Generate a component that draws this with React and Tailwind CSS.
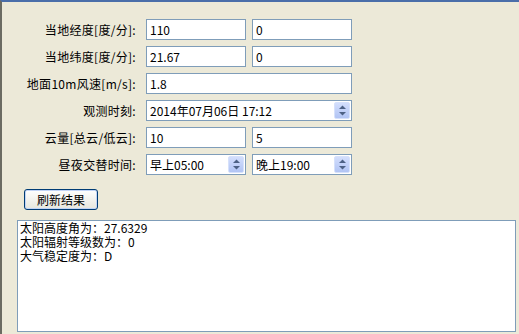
import React from 'react'

const font = { fontFamily: '"Noto Sans CJK SC", "DejaVu Sans", sans-serif' }

function Field({ value, className = '' }) {
  return (
    <div className={`h-[21px] bg-white border border-[#7f9db9] flex items-center pl-[3px] text-[12px] text-black ${className}`}>
      {value}
    </div>
  )
}

function SpinField({ value, className = '' }) {
  return (
    <div className={`h-[21px] bg-white border border-[#7f9db9] flex items-center pl-[3px] pr-[1px] text-[12px] text-black ${className}`}>
      <span className="flex-1">{value}</span>
      <div className="w-[16px] h-[17px] rounded-[2px] border border-[#d6e1fb] bg-linear-to-b from-[#d3defc] to-[#b1c4f4] flex flex-col items-center justify-center gap-[3px]">
        <svg width="7" height="4" viewBox="0 0 7 4"><path d="M0 4 L3.5 0.5 L7 4 Z" fill="#4d6185" /></svg>
        <svg width="7" height="4" viewBox="0 0 7 4"><path d="M0 0 L3.5 3.5 L7 0 Z" fill="#4d6185" /></svg>
      </div>
    </div>
  )
}

function Row({ label, children }) {
  return (
    <div className="flex items-center h-[21px]">
      <div className="w-[134px] text-right text-[12px] text-black leading-none tracking-[0.3px]">{label}</div>
      <div className="ml-[10px] flex gap-[6px]">{children}</div>
    </div>
  )
}

export default function App() {
  return (
    <div style={font} className="w-[519px] h-[334px] overflow-hidden bg-[#ece9d8] border-t-2 border-t-[#4a6ea9] border-l-2 border-l-[#6b6b62] pt-[17px]">
      <div className="flex flex-col gap-[6px]">
        <Row label="当地经度[度/分]:">
          <Field value="110" className="w-[100px]" />
          <Field value="0" className="w-[100px]" />
        </Row>
        <Row label="当地纬度[度/分]:">
          <Field value="21.67" className="w-[100px]" />
          <Field value="0" className="w-[100px]" />
        </Row>
        <Row label="地面10m风速[m/s]:">
          <Field value="1.8" className="w-[206px]" />
        </Row>
        <Row label="观测时刻:">
          <SpinField value="2014年07月06日 17:12" className="w-[206px]" />
        </Row>
        <Row label="云量[总云/低云]:">
          <Field value="10" className="w-[100px]" />
          <Field value="5" className="w-[100px]" />
        </Row>
        <Row label="昼夜交替时间:">
          <SpinField value="早上05:00" className="w-[100px]" />
          <SpinField value="晚上19:00" className="w-[100px]" />
        </Row>
      </div>

      <button className="ml-[22px] mt-[14px] w-[74px] h-[21px] rounded-[3px] border border-[#003c74] bg-linear-to-b from-white to-[#e6e6dd] shadow-[inset_0_0_0_1px_#c2d4f6] text-[12px] text-black flex items-center justify-center">
        刷新结果
      </button>

      <div className="ml-[15px] mt-[10px] w-[499px] h-[112px] bg-white border border-[#7f9db9] pl-[2px] text-[12px] leading-[14px] text-black">
        <div>太阳高度角为：27.6329</div>
        <div>太阳辐射等级数为：0</div>
        <div>大气稳定度为：D</div>
      </div>
    </div>
  )
}
